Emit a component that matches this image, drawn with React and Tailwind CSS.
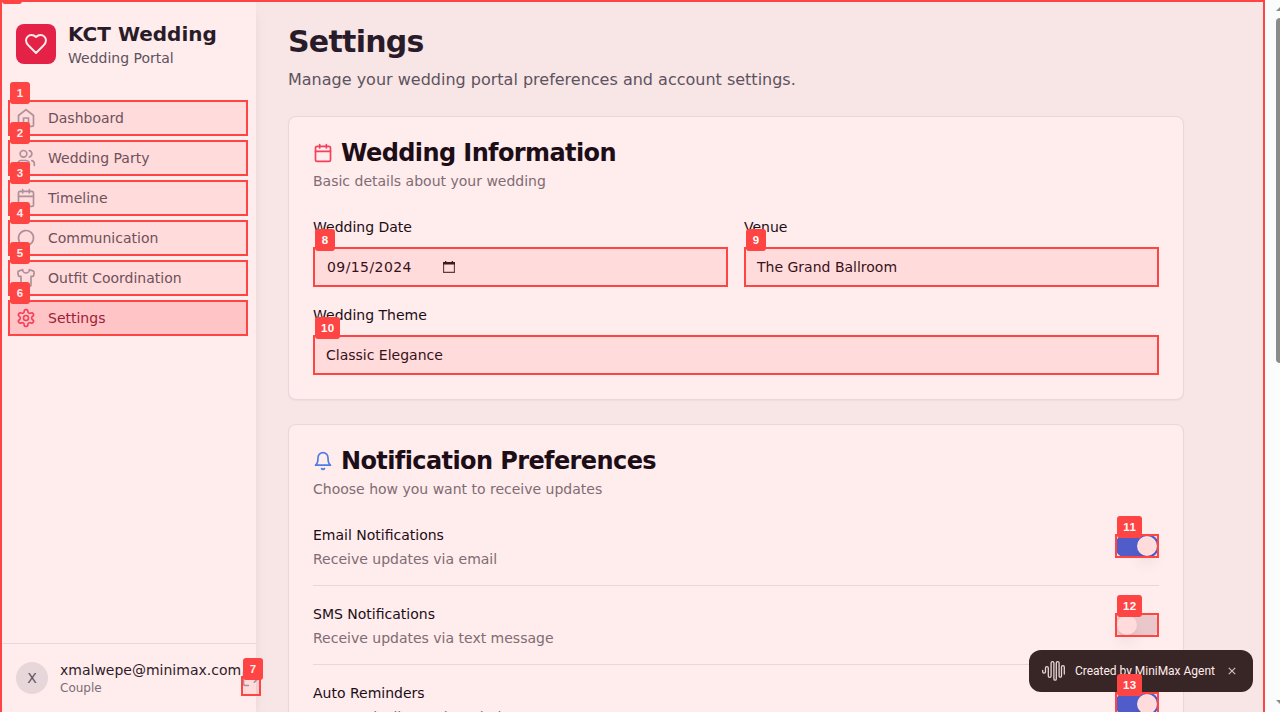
import { Users, Calendar, Shirt } from "lucide-react";

function Icon({ className, children }) {
  return (
    <svg
      className={className}
      viewBox="0 0 24 24"
      fill="none"
      stroke="currentColor"
      strokeWidth="2"
      strokeLinecap="round"
      strokeLinejoin="round"
    >
      {children}
    </svg>
  );
}

function Home({ className }) {
  return (
    <Icon className={className}>
      <path d="m3 9 9-7 9 7v11a2 2 0 0 1-2 2H5a2 2 0 0 1-2-2z" />
      <path d="M9 22V12h6v10" />
    </Icon>
  );
}

function MessageCircle({ className }) {
  return (
    <Icon className={className}>
      <path d="M7.9 20A9 9 0 1 0 4 16.1L2 22Z" />
    </Icon>
  );
}

function Heart({ className }) {
  return (
    <Icon className={className}>
      <path d="M19 14c1.49-1.46 3-3.21 3-5.5A5.5 5.5 0 0 0 16.5 3c-1.76 0-3 .5-4.5 2-1.5-1.5-2.74-2-4.5-2A5.5 5.5 0 0 0 2 8.5c0 2.3 1.5 4.05 3 5.5l7 7Z" />
    </Icon>
  );
}

function Bell({ className }) {
  return (
    <Icon className={className}>
      <path d="M6 8a6 6 0 0 1 12 0c0 7 3 9 3 9H3s3-2 3-9" />
      <path d="M10.3 21a1.94 1.94 0 0 0 3.4 0" />
    </Icon>
  );
}

function LogOut({ className }) {
  return (
    <Icon className={className}>
      <path d="M9 21H5a2 2 0 0 1-2-2V5a2 2 0 0 1 2-2h4" />
      <path d="m16 17 5-5-5-5" />
      <path d="M21 12H9" />
    </Icon>
  );
}

function Gear({ className }) {
  return (
    <Icon className={className}>
      <path d="M12.22 2h-.44a2 2 0 0 0-2 2v.18a2 2 0 0 1-1 1.73l-.43.25a2 2 0 0 1-2 0l-.15-.08a2 2 0 0 0-2.73.73l-.22.38a2 2 0 0 0 .73 2.73l.15.1a2 2 0 0 1 1 1.72v.51a2 2 0 0 1-1 1.74l-.15.09a2 2 0 0 0-.73 2.73l.22.38a2 2 0 0 0 2.73.73l.15-.08a2 2 0 0 1 2 0l.43.25a2 2 0 0 1 1 1.73V20a2 2 0 0 0 2 2h.44a2 2 0 0 0 2-2v-.18a2 2 0 0 1 1-1.73l.43-.25a2 2 0 0 1 2 0l.15.08a2 2 0 0 0 2.73-.73l.22-.39a2 2 0 0 0-.73-2.73l-.15-.08a2 2 0 0 1-1-1.74v-.5a2 2 0 0 1 1-1.74l.15-.09a2 2 0 0 0 .73-2.73l-.22-.38a2 2 0 0 0-2.73-.73l-.15.08a2 2 0 0 1-2 0l-.43-.25a2 2 0 0 1-1-1.73V4a2 2 0 0 0-2-2z" />
      <circle cx="12" cy="12" r="3" />
    </Icon>
  );
}

function Mark({ n, wide }) {
  return (
    <span className="pointer-events-none absolute inset-0 z-30 border-2 border-[#ff4444] bg-[#ff4444]/10">
      <span
        className={
          "absolute left-0 -top-5 flex h-[22px] items-center justify-center rounded-[3px] bg-[#ff4444] pl-[0.5px] pt-0.5 font-['Liberation_Sans',sans-serif] text-[11.5px] font-bold leading-none tracking-[0.4px] text-white " +
          (wide ? "w-[25px]" : "w-5")
        }
      >
        {n}
      </span>
    </span>
  );
}

const nav = [
  [Home, "Dashboard"],
  [Users, "Wedding Party"],
  [Calendar, "Timeline"],
  [MessageCircle, "Communication"],
  [Shirt, "Outfit Coordination"],
  [Gear, "Settings"],
];

function Sidebar() {
  return (
    <aside className="relative z-10 flex w-64 shrink-0 flex-col bg-white shadow-lg">
      <div className="flex h-[84px] items-center gap-3 px-4 pt-1">
        <div className="flex size-10 items-center justify-center rounded-lg bg-[#e11d48]">
          <Heart className="size-6 text-white" />
        </div>
        <div>
          <div className="text-xl font-bold leading-7 text-[#111827]">KCT Wedding</div>
          <div className="text-sm text-[#4b5563]">Wedding Portal</div>
        </div>
      </div>
      <nav className="mt-4 flex flex-col gap-1 px-2">
        {nav.map(([NavIcon, label], i) => (
          <div
            key={label}
            className={
              "relative flex h-9 items-center gap-3 px-2 text-sm " +
              (i === 5 ? "bg-[#ffe4e6] text-[#881337]" : "text-[#4b5563]")
            }
          >
            <NavIcon className={"size-5 " + (i === 5 ? "text-[#f43f5e]" : "text-[#9ca3af]")} />
            {label}
            <Mark n={i + 1} />
          </div>
        ))}
      </nav>
      <div className="mt-auto flex h-[69px] items-center border-t border-gray-200 px-4">
        <div className="flex size-8 shrink-0 items-center justify-center rounded-full bg-gray-200 text-sm text-[#4b5563]">X</div>
        <div className="ml-3 w-[181px] shrink-0">
          <div className="text-sm text-[#111827]">xmalwepe@minimax.com</div>
          <div className="text-xs leading-4 text-[#6b7280]">Couple</div>
        </div>
        <div className="relative mt-4 flex h-5 w-5 shrink-0 items-start text-[#9ca3af]">
          <LogOut className="-mt-2 size-5" />
          <Mark n={7} />
        </div>
      </div>
    </aside>
  );
}

function CardHead({ icon, title, text }) {
  return (
    <div>
      <div className="flex h-6 items-center gap-2">
        {icon}
        <h2 className="text-2xl font-semibold leading-6 tracking-tight text-gray-950">{title}</h2>
      </div>
      <p className="mt-1.5 text-sm text-[#71717a]">{text}</p>
    </div>
  );
}

function Field({ label, n, wide, children }) {
  return (
    <div className="flex-1">
      <div className="h-5 text-sm text-gray-950">{label}</div>
      <div className="relative mt-2.5 flex h-10 items-center pl-[13px] text-sm text-gray-950">
        {children}
        <Mark n={n} wide={wide} />
      </div>
    </div>
  );
}

function Toggle({ on, n }) {
  return (
    <div className="relative h-6 w-11">
      <div className={"flex h-6 items-center rounded-full px-0.5 " + (on ? "justify-end bg-[#2563eb]" : "bg-gray-200")}>
        <div className="size-5 rounded-full bg-white shadow-lg" />
      </div>
      <Mark n={n} wide />
    </div>
  );
}

const prefs = [
  ["Email Notifications", "Receive updates via email", true],
  ["SMS Notifications", "Receive updates via text message", false],
  ["Auto Reminders", "Automatically send reminders", true],
];

function Scrollbar() {
  return (
    <div className="flex h-full w-[15px] shrink-0 flex-col items-end bg-linear-to-r from-slate-50 to-[#fcfcfc]">
      <svg className="h-[18px] w-1" viewBox="0 0 4 18">
        <path d="M0 11h4V7z" fill="#8b8b8b" />
      </svg>
      <div className="h-[345px] w-1 rounded-l bg-[#8b8b8b]" />
      <svg className="mt-auto h-4 w-1" viewBox="0 0 4 16">
        <path d="M0 4h4v4z" fill="#8b8b8b" />
      </svg>
    </div>
  );
}

export default function App() {
  return (
    <div className="h-[720px] overflow-hidden bg-white font-['DejaVu_Sans',sans-serif]">
      <div className="relative flex h-[712px] overflow-hidden">
        <div className="relative flex w-[1265px] shrink-0 bg-[#f8f8f8]">
          <Sidebar />
          <main className="h-[712px] flex-1 overflow-hidden pl-8 pr-[81px] pt-6">
            <h1 className="text-3xl font-bold leading-9 tracking-tight text-[#111827]">Settings</h1>
            <p className="mt-2 text-base text-[#4b5563]">Manage your wedding portal preferences and account settings.</p>
            <section className="mt-6 h-[284px] rounded-lg border border-gray-200 bg-white p-6 shadow-xs">
              <CardHead icon={<Calendar className="size-5 text-[#f43f5e]" />} title="Wedding Information" text="Basic details about your wedding" />
              <div className="mt-[26px] flex gap-4">
                <Field label="Wedding Date" n={8}>
                  <span className="ml-px tracking-[0.42px]">09/15/2024</span>
                  <svg className="ml-[31px] size-3" viewBox="0 0 12 12" fill="none">
                    <path d="M.6 1.6h10.8v9.8H.6z" stroke="#3a3a3a" strokeWidth="1.1" />
                    <path d="M0 1h12v2.6H0zM2 0h1.3v1H2zM8.7 0H10v1H8.7z" fill="#111" />
                  </svg>
                </Field>
                <Field label="Venue" n={9}>The Grand Ballroom</Field>
              </div>
              <div className="mt-[18px] flex">
                <Field label="Wedding Theme" n={10} wide>Classic Elegance</Field>
              </div>
            </section>
            <section className="mt-6 h-[500px] rounded-lg border border-gray-200 bg-white p-6 shadow-xs">
              <CardHead icon={<Bell className="size-5 text-[#3b82f6]" />} title="Notification Preferences" text="Choose how you want to receive updates" />
              <div className="mt-[26px]">
                {prefs.map(([title, text, on], i) => (
                  <div key={title} className="mb-[18px] flex h-[61px] items-start justify-between border-b border-gray-200">
                    <div>
                      <div className="text-sm text-gray-950">{title}</div>
                      <div className="mt-1 text-sm text-[#71717a]">{text}</div>
                    </div>
                    <div className="mt-[9px]">
                      <Toggle on={on} n={i + 11} />
                    </div>
                  </div>
                ))}
              </div>
            </section>
          </main>
          <div className="absolute -bottom-2 left-0 right-0 top-0 z-20">
            <Mark />
          </div>
        </div>
        <Scrollbar />
        <div className="absolute left-[1029px] top-[650px] z-10 flex h-[42px] w-56 items-center rounded-xl bg-[#222] pl-[13px] font-[Roboto,sans-serif] text-xs text-white">
          <svg className="h-6 w-[25px]" viewBox="0 0 25 24" fill="none" stroke="#e5e5e5" strokeWidth="1.3" strokeLinecap="round">
            <path d="M.7 11.5v1.3a1.4 1.4 0 0 0 2.8 0V9a1.4 1.4 0 0 1 2.8 0v8a1.4 1.4 0 0 0 2.8 0V4a1.4 1.4 0 0 1 2.8 0v16a1.2 1.2 0 0 0 2.4 0V4a1.4 1.4 0 0 1 2.8 0v13a1.2 1.2 0 0 0 2.4 0V8a1.4 1.4 0 0 1 2.8 0v7" />
          </svg>
          <span className="ml-2 tracking-[-0.02px]">Created by MiniMax Agent</span>
          <svg className="ml-[13px] size-2" viewBox="0 0 8 8" stroke="#ccc" strokeWidth="1.2">
            <path d="M.8.8l6.4 6.4M7.2.8L.8 7.2" />
          </svg>
        </div>
      </div>
    </div>
  );
}
